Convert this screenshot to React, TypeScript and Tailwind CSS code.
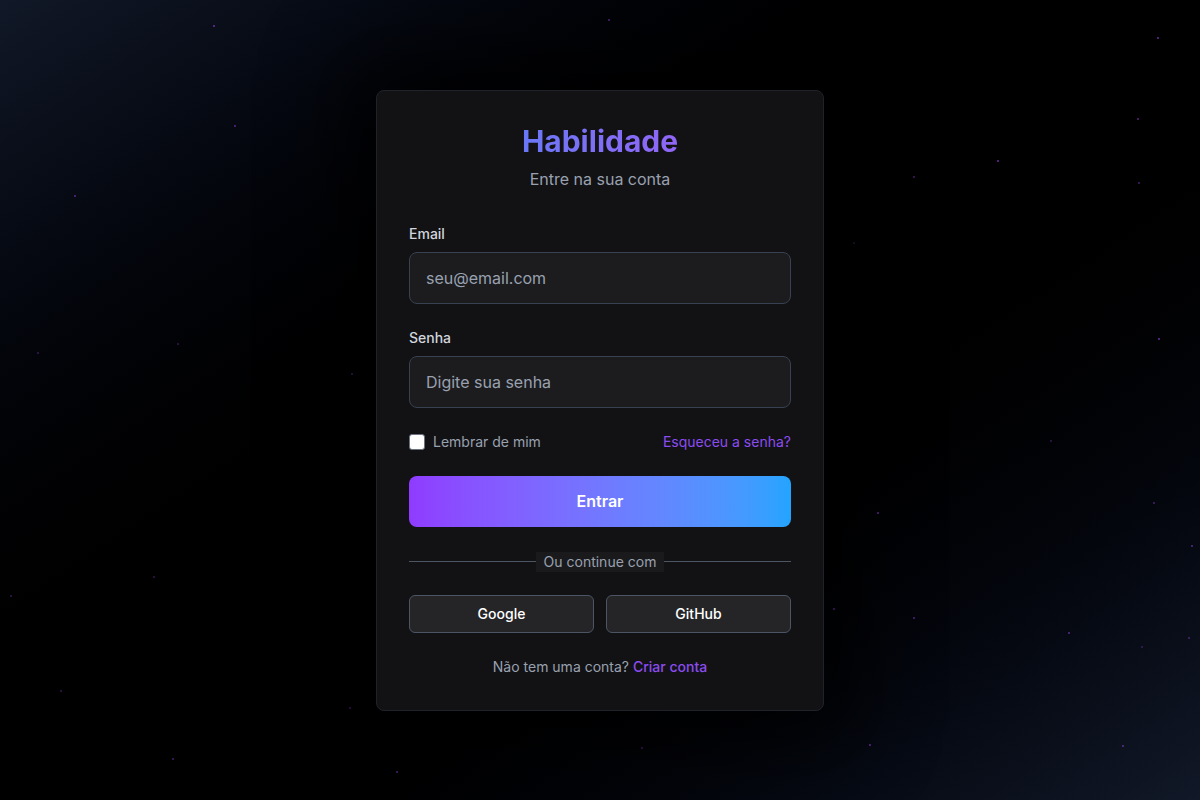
import React from 'react';

const STARS: [number, number, number][] = [
  [213, 25, 0.6], [608, 19, 0.5], [1157, 37, 0.6], [234, 125, 0.5], [74, 195, 0.5],
  [913, 176, 0.4], [997, 160, 0.6], [1137, 118, 0.5], [1138, 182, 0.4], [1158, 338, 0.6],
  [351, 373, 0.5], [177, 343, 0.3], [37, 352, 0.3], [877, 512, 0.6], [1153, 502, 0.4],
  [1191, 545, 0.5], [833, 608, 0.8], [913, 617, 0.5], [1068, 632, 0.5], [1188, 637, 0.4],
  [869, 744, 0.6], [1122, 745, 0.5], [641, 747, 0.4], [396, 771, 0.5], [172, 758, 0.4],
  [349, 707, 0.4], [10, 595, 0.3], [153, 576, 0.3], [853, 242, 0.3], [1141, 646, 0.3],
  [60, 690, 0.3], [1050, 440, 0.3],
];

export default function App() {
  return (
    <div
      className="relative min-h-screen w-full overflow-hidden bg-gradient-to-br from-[#111827] via-black to-[#111827] flex items-center justify-center"
      style={{ fontFamily: 'Inter, "Noto Sans", sans-serif' }}
    >
      {/* stars */}
      {STARS.map(([x, y, o], i) => (
        <span
          key={i}
          className="absolute w-[2px] h-[2px] rounded-full bg-purple-500"
          style={{ left: x, top: y, opacity: o }}
        />
      ))}

      <div className="relative w-[448px] rounded-lg border border-[#1f2229] bg-[#131316]/95 px-8 pt-8 pb-[33px] shadow-[0_0_80px_30px_rgba(0,0,0,0.8)]">
        <div className="text-center mb-[33px]">
          <h1 className="text-3xl font-bold bg-gradient-to-r from-[#3b82f6] to-[#a855f7] bg-clip-text text-transparent mb-2">
            Habilidade
          </h1>
          <p className="text-base text-gray-400">Entre na sua conta</p>
        </div>

        <form className="space-y-6" onSubmit={(e) => e.preventDefault()}>
          <div>
            <label className="block text-sm font-medium text-gray-300 mb-2">Email</label>
            <input
              type="email"
              placeholder="seu@email.com"
              className="w-full h-[52px] px-4 rounded-lg bg-[#1c1c1f] border border-[#374151] text-base text-white placeholder:text-gray-400 outline-none"
            />
          </div>

          <div>
            <label className="block text-sm font-medium text-gray-300 mb-2">Senha</label>
            <input
              type="password"
              placeholder="Digite sua senha"
              className="w-full h-[52px] px-4 rounded-lg bg-[#1c1c1f] border border-[#374151] text-base text-white placeholder:text-gray-400 outline-none"
            />
          </div>

          <div className="flex items-center justify-between">
            <label className="flex items-center text-sm text-gray-400">
              <span className="w-4 h-4 rounded-[3px] bg-white border border-gray-500 mr-2" />
              Lembrar de mim
            </label>
            <a className="text-sm text-[#8b4cf0]">Esqueceu a senha?</a>
          </div>

          <button
            type="submit"
            className="w-full h-[51px] mb-[25px] rounded-lg bg-gradient-to-r from-[#8f3bff] to-[#22a4ff] text-white text-base font-semibold"
          >
            Entrar
          </button>

          <div className="flex items-center mb-[23px]">
            <div className="flex-1 h-px bg-[#4b5563]" />
            <span className="px-2 text-sm text-gray-400 bg-[#1a1a1d]">Ou continue com</span>
            <div className="flex-1 h-px bg-[#4b5563]" />
          </div>

          <div className="grid grid-cols-2 gap-3">
            <button type="button" className="h-[38px] rounded-md bg-[#252528] border border-[#4b5563] text-sm font-medium text-white">
              Google
            </button>
            <button type="button" className="h-[38px] rounded-md bg-[#252528] border border-[#4b5563] text-sm font-medium text-white">
              GitHub
            </button>
          </div>

          <p className="text-center text-sm text-gray-400">
            Não tem uma conta? <a className="text-[#8b4cf0] font-medium">Criar conta</a>
          </p>
        </form>
      </div>
    </div>
  );
}
